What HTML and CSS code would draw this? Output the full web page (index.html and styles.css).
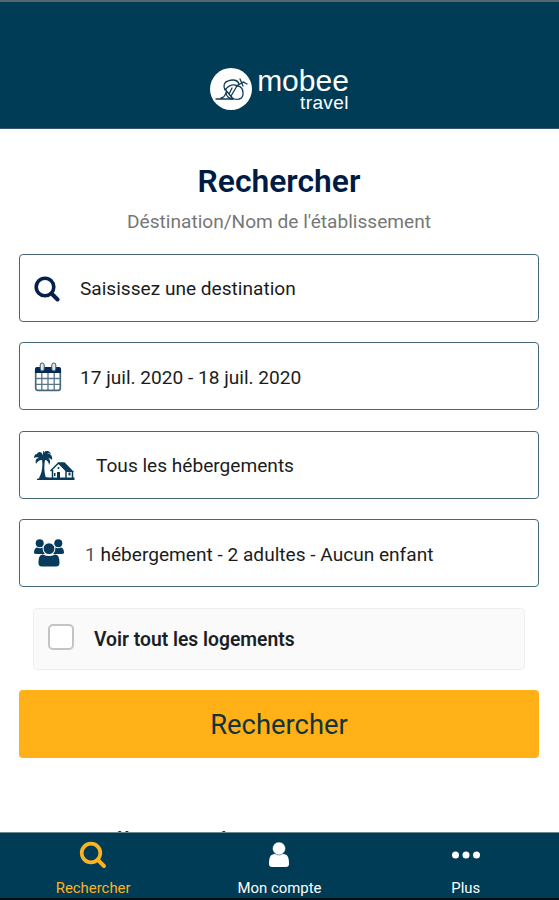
FILE: index.html
```
<!DOCTYPE html>
<html lang="fr">
  <head>
    <meta charset="UTF-8" />
    <title>Mobee Travel</title>
    <link rel="stylesheet" href="styles.css">
  </head>

  <body>
    <div class="app">
      <header class="header">
        <svg class="logo-icon" viewBox="0 0 42 42">
          <circle cx="21" cy="21" r="21" fill="#fff" />
          <g fill="none" stroke="#123c56" stroke-width="1.3" stroke-linecap="round" stroke-linejoin="round">
            <path d="M6 31h17M11 30c3 0 4-3 5-5M15 22c-2-4-1-8 3-9 5-2 10-1 11 3M15 22c4-5 9-6 13-4" />
            <path d="M15 21l8 10M23 31c-4 0-7-3-7-7M22 20l-3 6M27 18l-6 10M28 18c6 1 7 12 1 13-3 1-7 0-8-3" />
            <path d="M26 18l8-4M30 11l3 7M33 14l4 2" />
          </g>
        </svg>
        <div class="logo-text">
          <span class="logo-name">mobee</span>
          <span class="logo-sub">travel</span>
        </div>
      </header>

      <main class="main">
        <h1 class="title">Rechercher</h1>
        <p class="subtitle">Déstination/Nom de l'établissement</p>

        <!-- formulaire de recherche -->
        <form class="search">
          <div class="field">
            <svg class="icon-search" viewBox="0 0 26 26">
              <circle cx="11" cy="11" r="8.8" fill="none" stroke="currentColor" stroke-width="3.6" />
              <path d="M17.5 17.5l6 6" stroke="currentColor" stroke-width="4" stroke-linecap="round" />
            </svg>
            <span>Saisissez une destination</span>
          </div>
          <div class="field">
            <svg class="icon-calendar" viewBox="0 0 28 30">
              <rect x="1.7" y="6" width="24.6" height="22.3" rx="2" fill="#fff" stroke="#49697f" stroke-width="1.7" />
              <path d="M1 11V7q0-2 2-2h22q2 0 2 2v4z" fill="#082a50" />
              <path d="M2 16.5h24M2 22.3h24M7.8 11v17M14 11v17M20.2 11v17" stroke="#57758b" stroke-width="1.3" />
              <rect x="6.2" y="1" width="4" height="8" rx="2" fill="#dfe8ed" stroke="#36566f" />
              <rect x="17.8" y="1" width="4" height="8" rx="2" fill="#dfe8ed" stroke="#36566f" />
            </svg>
            <span>17 juil. 2020 - 18 juil. 2020</span>
          </div>
          <div class="field">
            <svg class="icon-house" viewBox="0 0 42 30">
              <g fill="#073b59">
                <path d="M9 4.500C8 0 4 0 3 3c-2 0-3 2-3 4 2-1 4-1 5 0-3 0-4 3-3 6 1-2 3-4 6-4 1 6 0 13-3 18h7c-2-6-2-12-1-18 2 0 4 2 4 5 2-3 1-6-1-7 2 0 3 1 4 2 1-4-2-7-5-6 1-1 2-1 4 0-2-4-6-4-7-1 0-2 0-3 1-4-2 0-2 3-2 6.500z" />
                <path d="M24 11.200h6.500L40 21h-7.500z" />
                <path d="M3 28c4-2 8-2 12-1.500h25.500V29H3z" />
              </g>
              <path d="M16.500 20l8-8 8.500 8.500M18.500 19v8M32 20v7M38.500 20v7" fill="none" stroke="#073b59" stroke-width="1.500" />
              <path d="M23 21h3v6h-3zM34.500 21.500h2v3h-2zM20 22h1.500v3H20z" fill="#073b59" />
              <circle cx="24.500" cy="17" r="1" fill="#073b59" />
            </svg>
            <span>Tous les hébergements</span>
          </div>
          <div class="field">
            <svg class="icon-people" viewBox="0 0 30 28" fill="#073b59">
              <circle cx="5.7" cy="4.3" r="4" />
              <circle cx="24.3" cy="4.3" r="4" />
              <path d="M0 14q0-5 3-5.500 3 1.500 6 0 0 5 2 6.500H3q-3 0-3-1z" />
              <path d="M30 14q0-5-3-5.500-3 1.500-6 0 0 5-2 6.500h8q3 0 3-1z" />
              <circle cx="15" cy="9.700" r="5.900" stroke="#fff" stroke-width="1" />
              <path d="M4.500 24c0-5 1-8.500 4.500-8.500q6 3 12 0c3.500 0 4.500 3.500 4.500 8.500q0 3.500-3.500 3.500H8q-3.500 0-3.500-3.500z" />
            </svg>
            <span><span class="count">1</span> hébergement - 2 adultes - Aucun enfant</span>
          </div>

          <div class="option">
            <span class="checkbox"></span>
            <span class="option-label">Voir tout les logements</span>
          </div>

          <button class="submit" type="button">Rechercher</button>
        </form>

        <h2 class="next-title">Les meilleures destinations</h2>
      </main>

      <!-- barre de navigation -->
      <nav class="tabs">
        <div class="tab active">
          <svg class="tab-icon" viewBox="0 0 28 28">
            <circle cx="12" cy="12" r="9.300" fill="none" stroke="currentColor" stroke-width="3.700" />
            <path d="M18.800 18.800l6.200 6.200" stroke="currentColor" stroke-width="4" stroke-linecap="round" />
          </svg>
          <span>Rechercher</span>
        </div>
        <div class="tab">
          <svg class="tab-icon" viewBox="0 0 28 28" fill="currentColor">
            <path d="M4 23c0-6 1-10 6-10h8c5 0 6 4 6 10q0 3-3 3H7q-3 0-3-3z" />
            <circle cx="14" cy="7.500" r="6.500" stroke="#003c56" stroke-width=".5" />
          </svg>
          <span>Mon compte</span>
        </div>
        <div class="tab">
          <svg class="tab-icon" viewBox="0 0 28 28" fill="currentColor">
            <circle cx="3.500" cy="14" r="3.500" />
            <circle cx="14" cy="14" r="3.500" />
            <circle cx="24.500" cy="14" r="3.500" />
          </svg>
          <span>Plus</span>
        </div>
      </nav>
    </div>
  </body>
</html>
```
FILE: styles.css
```
* {
  box-sizing: border-box;
}

body {
  margin: 0;
  font-family: Roboto, "Liberation Sans", sans-serif;
  background-color: #fff;
}

.app {
  display: flex;
  flex-direction: column;
  height: 900px;
  overflow: hidden;
}

.header {
  display: flex;
  flex-shrink: 0;
  align-items: flex-start;
  justify-content: center;
  gap: 5px;
  height: 129px;
  padding-top: 66px;
  color: #fff;
  background-color: #003c56;
  border-top: 2px solid #586570;
  border-bottom: 1px solid #31566c;
}

.logo-icon {
  width: 42px;
  height: 42px;
}

.logo-text {
  display: flex;
  flex-direction: column;
  align-items: flex-end;
  font-family: "Liberation Sans", sans-serif;
}

.logo-name {
  font-size: 30px;
  line-height: 26px;
}

.logo-sub {
  font-size: 19px;
  line-height: 18px;
  letter-spacing: 0.4px;
}

.main {
  flex: 1;
  min-height: 0;
  padding: 0 20px 0 19px;
  overflow: hidden;
}

.title {
  margin: 32px 0 0;
  font-size: 31.8px;
  font-weight: 600;
  line-height: 40px;
  text-align: center;
  color: #001b43;
}

.subtitle {
  margin: 10px 0 0;
  font-size: 19.1px;
  line-height: 22px;
  text-align: center;
  color: #777;
}

.search {
  display: flex;
  flex-direction: column;
  gap: 20.5px;
  margin-top: 20.6px;
}

.field {
  display: flex;
  align-items: center;
  height: 68px;
  padding: 2px 0 0 14px;
  font-size: 19.1px;
  color: #1c1c1c;
  border: 1.5px solid #46687c;
  border-radius: 4px;
}

.icon-search {
  width: 26px;
  height: 26px;
  margin-right: 20px;
  color: #06204c;
}

.icon-calendar {
  width: 28px;
  height: 30px;
  margin-right: 18px;
}

.icon-house {
  width: 42px;
  height: 30px;
  margin-right: 20px;
}

.icon-people {
  width: 30px;
  height: 28px;
  margin: 0 21px 2px 0;
}

.count {
  color: #555;
}

.option {
  display: flex;
  align-items: center;
  height: 62px;
  margin: 0 14px;
  padding-left: 14px;
  background-color: #fafafa;
  border: 1px solid #eee;
  border-radius: 4px;
}

.checkbox {
  width: 26px;
  height: 26px;
  margin: 0 20px 3px 0;
  background-color: #fff;
  border: 2px solid #c4c4c4;
  border-radius: 5px;
}

.option-label {
  padding-top: 2px;
  font-size: 19.3px;
  font-weight: 600;
  color: #1b1f25;
}

.submit {
  height: 68px;
  padding: 2px 0 0;
  font-family: inherit;
  font-size: 27.4px;
  color: #12343c;
  background-color: #ffb117;
  border: none;
  border-radius: 4px;
}

.next-title {
  margin: 67px 0 0 -6px;
  font-size: 29.6px;
  font-weight: 400;
  line-height: 36px;
  white-space: nowrap;
  color: #003c56;
}

.tabs {
  display: flex;
  flex-shrink: 0;
  height: 68px;
  background-color: #003c56;
  border-top: 1px solid #6f8791;
  border-bottom: 2px solid #000b12;
}

.tab {
  display: flex;
  flex: 1;
  flex-direction: column;
  align-items: center;
  padding-top: 8px;
  font-size: 14.9px;
  line-height: 18px;
  color: #fff;
}

.tab.active {
  color: #fcb322;
}

.tab-icon {
  width: 28px;
  height: 28px;
  margin-bottom: 10px;
}
```
